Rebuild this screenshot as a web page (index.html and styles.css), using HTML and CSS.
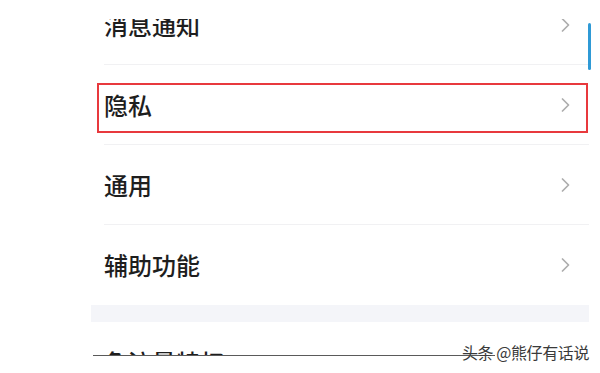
FILE: index.html
```html
<!DOCTYPE html>
<html lang="zh-CN">
<head>
<meta charset="utf-8">
<link rel="stylesheet" href="styles.css">
</head>
<body>
<div class="screen">
  <div class="clip">
    <div class="list">
      <div class="row"><span class="label">消息通知</span><svg class="chev" width="9" height="14" viewBox="0 0 9 14"><polyline points="1.5,1 7.5,7 1.5,13"/></svg></div>
      <div class="row marked"><span class="label">隐私</span><svg class="chev" width="9" height="14" viewBox="0 0 9 14"><polyline points="1.5,1 7.5,7 1.5,13"/></svg><div class="redbox"></div></div>
      <div class="row"><span class="label">通用</span><svg class="chev" width="9" height="14" viewBox="0 0 9 14"><polyline points="1.5,1 7.5,7 1.5,13"/></svg></div>
      <div class="row last"><span class="label">辅助功能</span><svg class="chev" width="9" height="14" viewBox="0 0 9 14"><polyline points="1.5,1 7.5,7 1.5,13"/></svg></div>
      <div class="band"></div>
      <div class="row last"><span class="label">免流量特权</span></div>
    </div>
  </div>
  <div class="rule"></div>
  <div class="scrollbar"></div>
  <div class="watermark">头条 @熊仔有话说</div>
</div>
</body>
</html>
```
FILE: styles.css
```css
html, body {
  margin: 0;
  padding: 0;
  background: #ffffff;
}
.screen {
  position: relative;
  width: 600px;
  height: 373px;
  overflow: hidden;
  background: #ffffff;
  font-family: "Noto Sans CJK SC", "Noto Sans", sans-serif;
}
.clip {
  margin-top: 19px;
  height: 336px;
  overflow: hidden;
}
.list {
  margin-top: -34px;
  margin-left: 91px;
  width: 498px;
  display: flex;
  flex-direction: column;
}
.row {
  position: relative;
  box-sizing: border-box;
  height: 80px;
  margin-left: 13px;
  padding-right: 19px;
  display: flex;
  align-items: center;
  justify-content: space-between;
  border-bottom: 1px solid #f1f1f3;
}
.row.last {
  border-bottom: none;
}
.label {
  font-size: 24px;
  font-weight: 500;
  color: #1e1e1e;
  line-height: 1;
}
.chev polyline {
  fill: none;
  stroke: #adadad;
  stroke-width: 1.7;
  stroke-linecap: round;
  stroke-linejoin: round;
}
.redbox {
  position: absolute;
  left: -7px;
  top: 18px;
  width: 491px;
  height: 50px;
  box-sizing: border-box;
  border: 2px solid #e8393d;
}
.band {
  height: 17px;
  background: #f4f5f9;
}
.rule {
  margin-left: 93px;
  width: 402px;
  height: 1px;
  background: #5a5a5a;
}
.scrollbar {
  position: absolute;
  left: 588px;
  top: 23px;
  width: 3px;
  height: 47px;
  border-radius: 2px;
  background: #2f9ad6;
}
.watermark {
  position: absolute;
  right: 11px;
  top: 341px;
  font-size: 16px;
  line-height: 22px;
  color: #3a3a3a;
  letter-spacing: -0.4px;
}
```
